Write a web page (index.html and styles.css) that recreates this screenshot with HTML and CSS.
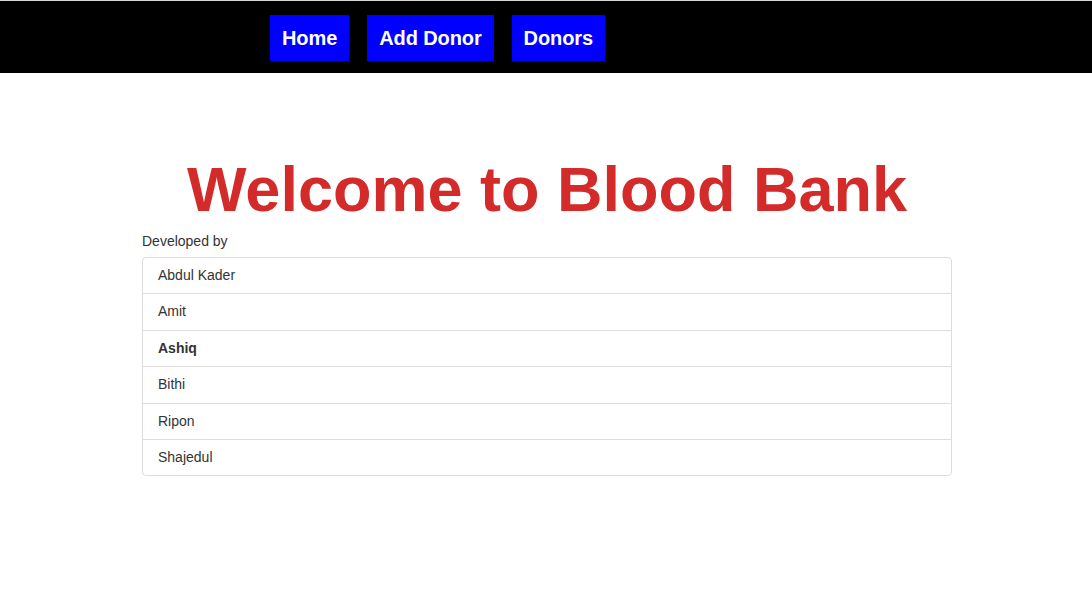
FILE: index.html
```html
<!DOCTYPE html>
<html lang="en">
<head>
<meta charset="utf-8">
<title>Blood Bank</title>
<link rel="stylesheet" href="styles.css">
</head>
<body>
<nav class="topnav">
  <a class="navbtn" href="#">Home</a>
  <a class="navbtn" href="#">Add Donor</a>
  <a class="navbtn" href="#">Donors</a>
</nav>
<main class="content">
  <h1 class="title">Welcome to Blood Bank</h1>
  <div class="label">Developed by</div>
  <ul class="list-group">
    <li class="list-item">Abdul Kader</li>
    <li class="list-item">Amit</li>
    <li class="list-item bold">Ashiq</li>
    <li class="list-item">Bithi</li>
    <li class="list-item">Ripon</li>
    <li class="list-item">Shajedul</li>
  </ul>
</main>
</body>
</html>
```

FILE: styles.css
```css
* { box-sizing: border-box; }
html, body { margin: 0; padding: 0; background: #fff; }
body {
  font-family: "Liberation Sans", Arial, Helvetica, sans-serif;
  font-size: 14px;
  line-height: 20px;
  color: #333;
}
.topnav {
  display: flex;
  align-items: flex-start;
  gap: 18px;
  height: 73px;
  border-top: 1px solid #d6d6d6;
  background: #000;
  padding: 14px 0 0 270px;
}
.navbtn {
  display: block;
  background: #0000ff;
  color: #fff;
  text-decoration: none;
  font-weight: bold;
  font-size: 20px;
  line-height: 22px;
  padding: 12px 12px;
  letter-spacing: -0.1px;
}
.content {
  width: 810px;
  margin-left: calc(50% - 404px);
  padding-top: 82px;
}
.title {
  margin: 0 0 7px 0;
  text-align: center;
  color: #d32a2a;
  font-size: 63px;
  line-height: 69px;
  font-weight: bold;
}
.label {
  margin-bottom: 6px;
  font-size: 14px;
  line-height: 20px;
  color: #333;
}
.list-group {
  list-style: none;
  margin: 0;
  padding: 0;
}
.list-item {
  border: 1px solid #ddd;
  margin-bottom: -1px;
  padding: 8px 15px;
  line-height: 19.4px;
  background: #fff;
}
.list-item:first-child { border-radius: 4px 4px 0 0; }
.list-item:last-child { border-radius: 0 0 4px 4px; margin-bottom: 0; }
.bold { font-weight: bold; }
```
